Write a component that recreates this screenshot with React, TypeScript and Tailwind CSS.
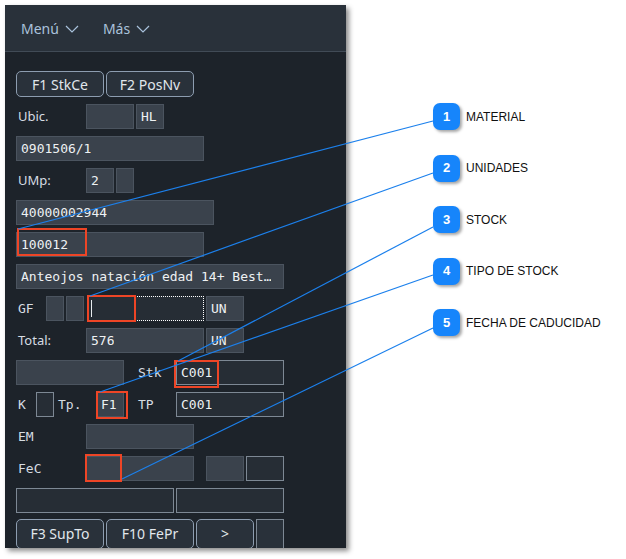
import type { ReactNode } from "react";

const MONO = "font-['DejaVu_Sans_Mono','Liberation_Mono',monospace]";
const SANS = "font-['Noto_Sans','Open_Sans',sans-serif]";

function Chevron() {
  return (
    <svg width="14" height="8" viewBox="0 0 14 8" fill="none" className="ml-[6px] mt-[2px]">
      <path d="M1 1 L7 7 L13 1" stroke="currentColor" strokeWidth="1.2" />
    </svg>
  );
}

// readonly field (lighter fill) / editable field (dark fill, light border)
function Field({ className, value, edit }: { className: string; value?: string; edit?: boolean }) {
  return (
    <div
      className={`${className} mr-[2px] h-[25px] flex items-center px-[4px] border text-[13px] text-[#eef1f3] ${MONO} ${
        edit ? "bg-[#262d35] border-[#7d8894]" : "bg-[#3a424c] border-[#4b545f]"
      }`}
    >
      <span className="whitespace-nowrap overflow-hidden">{value}</span>
    </div>
  );
}

function Label({ className, children, mono }: { className: string; children: ReactNode; mono?: boolean }) {
  return (
    <div className={`${className} h-[25px] flex items-center pl-[2px] text-[13px] text-[#d6dce2] whitespace-nowrap ${mono ? MONO : SANS}`}>
      {children}
    </div>
  );
}

function Btn({ className, children, tall }: { className: string; children?: ReactNode; tall?: boolean }) {
  return (
    <div
      className={`${className} mr-[2px] -mt-px ${tall ? "h-[30px] items-start pt-[3px]" : "h-[26px] items-center"} rounded-[5px] border border-[#8d9db0] bg-[#29313a] flex justify-center text-[14px] text-[#e1e7ec] ${SANS}`}
    >
      {children}
    </div>
  );
}

const callouts = ["MATERIAL", "UNIDADES", "STOCK", "TIPO DE STOCK", "FECHA DE CADUCIDAD"];

export default function App() {
  return (
    <div className="relative w-[626px] h-[559px] bg-white flex overflow-hidden">
      {/* phone screen */}
      <div className="ml-[5px] mt-[5px] w-[341px] h-[543px] bg-[#1d232a] overflow-hidden shadow-[3px_3px_5px_rgba(0,0,0,0.45)] flex flex-col">
        <div className={`h-[47px] shrink-0 bg-[#29313a] border-b border-[#414b56] flex items-center pl-[16px] gap-[24px] text-[14px] text-[#a9c2dc] ${SANS}`}>
          <div className="flex items-center">Menú<Chevron /></div>
          <div className="flex items-center">Más<Chevron /></div>
        </div>

        <div className="pt-[20px] pl-[11px] grid grid-cols-[repeat(27,10px)] auto-rows-[25px] gap-y-[7px]">
          {/* row 1 */}
          <Btn className="col-start-1 col-span-9">F1 StkCe</Btn>
          <Btn className="col-start-10 col-span-9">F2 PosNv</Btn>

          {/* Ubic */}
          <Label className="col-start-1 col-span-7">Ubic.</Label>
          <Field className="col-start-8 col-span-5" />
          <Field className="col-start-13 col-span-3" value="HL" />

          <Field className="col-start-1 col-span-19" value="0901506/1" />

          <Label className="col-start-1 col-span-7">UMp:</Label>
          <Field className="col-start-8 col-span-3" value="2" />
          <Field className="col-start-11 col-span-2" />

          <Field className="col-start-1 col-span-20" value="40000002944" />
          <Field className="col-start-1 col-span-19" value="100012" />
          <Field className="col-start-1 col-span-27" value="Anteojos natación edad 14+ Best…" />

          {/* GF */}
          <Label className="col-start-1 col-span-3" mono>GF</Label>
          <Field className="col-start-4 col-span-2" />
          <Field className="col-start-6 col-span-2" />
          <div className="col-start-8 col-span-12 mr-[2px] h-[25px] ml-[2px] bg-[#262d35] border border-dotted border-white flex items-center pl-[2px]">
            <div className="w-px h-[17px] bg-[#e8ecef]" />
          </div>
          <Field className="col-start-20 col-span-4" value="UN" />

          {/* Total */}
          <Label className="col-start-1 col-span-7">Total:</Label>
          <Field className="col-start-8 col-span-12" value="576" />
          <Field className="col-start-20 col-span-4" value="UN" />

          {/* Stk */}
          <Field className="col-start-1 col-span-11" />
          <Label className="col-start-13 col-span-4" mono>Stk</Label>
          <Field className="col-start-17 col-span-11" value="C001" edit />

          {/* K / Tp */}
          <Label className="col-start-1 col-span-2" mono>K</Label>
          <Field className="col-start-3 col-span-2" edit />
          <Label className="col-start-5 col-span-4" mono>Tp.</Label>
          <Field className="col-start-9 col-span-3" value="F1" />
          <Label className="col-start-13 col-span-4" mono>TP</Label>
          <Field className="col-start-17 col-span-11" value="C001" edit />

          <Label className="col-start-1 col-span-7" mono>EM</Label>
          <Field className="col-start-8 col-span-11" />

          <Label className="col-start-1 col-span-7" mono>FeC</Label>
          <Field className="col-start-8 col-span-11" />
          <Field className="col-start-20 col-span-4" />
          <Field className="col-start-24 col-span-4" edit />

          <Field className="col-start-1 col-span-16" edit />
          <Field className="col-start-17 col-span-11" edit />

          {/* bottom buttons */}
          <Btn className="col-start-1 col-span-9" tall>F3 SupTo</Btn>
          <Btn className="col-start-10 col-span-9" tall>F10 FePr</Btn>
          <Btn className="col-start-19 col-span-6" tall>&gt;</Btn>
          <div className="col-start-25 col-span-3 mr-[2px] -mt-px h-[30px] border border-[#7d8894] bg-[#29313a]" />
        </div>
      </div>

      {/* callout list */}
      <div className="ml-[87px] mt-[103px] flex flex-col gap-[24.5px]">
        {callouts.map((c, i) => (
          <div key={c} className="flex items-center h-[27px]">
            <div className="w-[27px] h-[27px] rounded-[7px] bg-[#1685fb] shadow-[2px_2px_3px_rgba(0,0,0,0.35)] flex items-center justify-center text-white text-[13px] font-bold font-['Liberation_Sans',Arial,sans-serif]">
              {i + 1}
            </div>
            <span className="ml-[6px] text-[12px] text-[#111] font-['Liberation_Sans',Arial,sans-serif]">{c}</span>
          </div>
        ))}
      </div>

      {/* annotation overlay: highlight boxes and leader lines */}
      <svg className="absolute inset-0 pointer-events-none" width="626" height="559">
        <g fill="none" stroke="#ee4526" strokeWidth="2">
          <rect x="18" y="229" width="68" height="26" />
          <rect x="88" y="296" width="47" height="25" />
          <rect x="175" y="361" width="43" height="26" />
          <rect x="97" y="392" width="30" height="26" />
          <rect x="86" y="455" width="35" height="26" />
        </g>
        <g stroke="#1c80ec" strokeWidth="1.2">
          <line x1="433" y1="121" x2="18" y2="229" />
          <line x1="433" y1="173" x2="90" y2="296" />
          <line x1="433" y1="227" x2="178" y2="361" />
          <line x1="433" y1="275" x2="100" y2="392" />
          <line x1="433" y1="328" x2="122" y2="479" />
        </g>
      </svg>
    </div>
  );
}
